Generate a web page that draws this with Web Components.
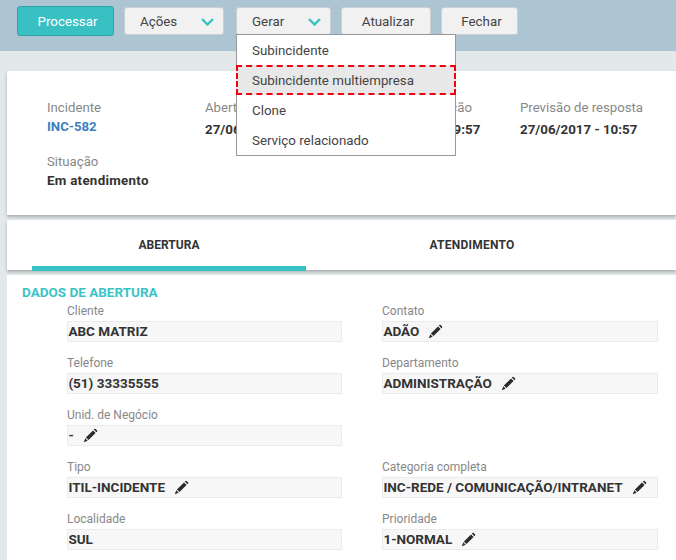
<!DOCTYPE html>
<html lang="pt"><head><meta charset="utf-8"><title>Incidente</title>
<style>
html,body{margin:0;padding:0;background:#e3e8ea;height:560px;overflow:hidden}
body{font-family:Roboto,"Liberation Sans",sans-serif;color:#333}
</style></head><body>
<app-toolbar>
  <app-button primary>Processar</app-button>
  <app-button caret style="width:100px">Ações</app-button>
  <app-button caret style="width:95px;margin-left:2px">Gerar
    <app-menu slot="overlay">
      <app-menu-item>Subincidente</app-menu-item>
      <app-menu-item marked>Subincidente multiempresa</app-menu-item>
      <app-menu-item>Clone</app-menu-item>
      <app-menu-item>Serviço relacionado</app-menu-item>
    </app-menu>
  </app-button>
  <app-button style="width:90px">Atualizar</app-button>
  <app-button style="width:77px">Fechar</app-button>
</app-toolbar>
<app-main>
  <app-summary>
    <app-info label="Incidente" link>INC-582</app-info>
    <app-info label="Abertura" date>27/06/2017 - 09:57</app-info>
    <app-info label="Última atualização" date>27/06/2017 - 09:57</app-info>
    <app-info label="Previsão de resposta" date>27/06/2017 - 10:57</app-info>
    <app-info label="Situação" style="letter-spacing:.28px">Em atendimento</app-info>
  </app-summary>
  <app-tabs>
    <app-tab active>ABERTURA</app-tab>
    <app-tab style="letter-spacing:.25px">ATENDIMENTO</app-tab>
  </app-tabs>
  <app-section title="DADOS DE ABERTURA">
    <app-field label="Cliente">ABC MATRIZ</app-field>
    <app-field label="Contato" editable>ADÃO</app-field>
    <app-field label="Telefone">(51) 33335555</app-field>
    <app-field label="Departamento" editable>ADMINISTRAÇÃO</app-field>
    <app-field label="Unid. de Negócio" editable>-</app-field>
    <span></span>
    <app-field label="Tipo" editable>ITIL-INCIDENTE</app-field>
    <app-field label="Categoria completa" editable>INC-REDE / COMUNICAÇÃO/INTRANET</app-field>
    <app-field label="Localidade">SUL</app-field>
    <app-field label="Prioridade" editable>1-NORMAL</app-field>
  </app-section>
</app-main>
<script>
const def=(name,html,extra)=>{customElements.define(name,class extends HTMLElement{
  constructor(){super();this.attachShadow({mode:'open'}).innerHTML=html}
  connectedCallback(){if(extra)extra(this)}
})};
def('app-toolbar',`<style>:host{display:flex;align-items:center;gap:10px;height:51px;box-sizing:border-box;padding:0 0 9px 17px;background:#adc4d2}</style><slot></slot>`);
def('app-button',`<style>
:host{display:block;position:relative;box-sizing:border-box;height:28px;flex:none;font-size:13.33px;color:#444}
.b{display:flex;align-items:center;justify-content:center;height:100%;box-sizing:border-box;background:#f1f1f2;border:1px solid #c8d0d5;border-radius:3px;padding-left:4px}
:host([primary]) {height:30px;width:97px;color:#fff}
:host([primary]) .b{background:#38c0c3;border-color:#2ea3a8}
:host([caret]) .b{justify-content:space-between;padding:0 9px 0 15px}
svg{display:none;width:13px;height:8px;margin-top:2px}
:host([caret]) svg{display:block}
</style><div class="b"><span><slot></slot></span><svg viewBox="0 0 13 8"><path d="M1 1l5.5 5.5L12 1" fill="none" stroke="#38c0c3" stroke-width="2.4"/></svg></div><slot name="overlay"></slot>`);
def('app-menu',`<style>:host{display:block;position:absolute;left:0;top:27px;width:220px;height:122px;box-sizing:border-box;background:#fff;border:1px solid #999;padding:0;z-index:5}</style><slot></slot>`);
def('app-menu-item',`<style>:host{display:flex;align-items:center;box-sizing:border-box;height:30px;padding-left:15px;font-size:13.33px;color:#444}
:host([marked]){background:#e8e8e8;outline:2px dashed #f00010;outline-offset:-2px;margin-left:-1px;margin-right:-1px;padding-left:16px}</style><slot></slot>`);
def('app-main',`<style>:host{display:block;padding:20px 0 0 7px}</style><slot></slot>`);
def('app-summary',`<style>:host{display:grid;grid-template-columns:158px 158px 157px 1fr;grid-auto-rows:54px;box-sizing:border-box;height:144px;padding:27px 0 0 40px;background:#fff;box-shadow:0 2px 3px rgba(60,70,70,.35);margin-bottom:5px}</style><slot></slot>`);
def('app-info',`<style>:host{display:block;font-size:13.2px}
.l{color:#888;line-height:20px;white-space:nowrap;letter-spacing:0}.v{font-weight:700;font-size:13.33px;color:#333;line-height:18px;white-space:nowrap}
:host([date]) .v{margin-top:3px}
:host([link]) .v{color:#3d7fc1;font-size:13.2px}</style><div class="l"></div><div class="v"><slot></slot></div>`,el=>{el.shadowRoot.querySelector('.l').textContent=el.getAttribute('label')});
def('app-tabs',`<style>:host{display:flex;gap:29px;height:50px;padding-left:25px;background:#fff;box-shadow:0 2px 3px rgba(60,70,70,.35);margin-bottom:5px}</style><slot></slot>`);
def('app-tab',`<style>:host{display:flex;justify-content:center;box-sizing:border-box;width:274px;height:51px;padding-top:18px;font-size:12px;font-weight:700;line-height:14px;color:#333}
:host([active]){border-bottom:5px solid #38c0c3}</style><slot></slot>`);
def('app-section',`<style>:host{display:block;background:#fff;height:285px;box-sizing:border-box;padding:10px 0 0 15px}
h2{margin:0;font-size:13.5px;font-weight:700;line-height:14px;color:#3cc3c6}
.g{display:grid;grid-template-columns:275px 276px;column-gap:40px;grid-auto-rows:52px;padding:5px 0 0 45px}</style><h2></h2><div class="g"><slot></slot></div>`,el=>{el.shadowRoot.querySelector('h2').textContent=el.getAttribute('title')});
def('app-field',`<style>:host{display:block;font-size:12px}
.l{color:#888;line-height:14px;height:14px}
.v{display:flex;align-items:center;gap:9px;box-sizing:border-box;height:21px;margin-top:3px;background:#f7f7f7;border:1px solid #ebebeb;padding:0 0 1px .4px;font-size:13.5px;font-weight:700;color:#333;white-space:nowrap}
svg{display:none;width:15px;height:15px;flex:none}
:host([editable]) svg{display:block}
</style><div class="l"></div><div class="v"><span><slot></slot></span><svg viewBox="0 0 15 15"><path fill="#2b2b2b" d="M2.9 9.5 10 2.4l2.6 2.6-7.1 7.1zM10.8 1.6l.7-.7q.6-.5 1.1 0l1.5 1.5q.5.5 0 1.1l-.7.7zM2.3 10.3l2.4 2.4L.8 14.2z"/></svg></div>`,el=>{el.shadowRoot.querySelector('.l').textContent=el.getAttribute('label')});
</script>
</body></html>
